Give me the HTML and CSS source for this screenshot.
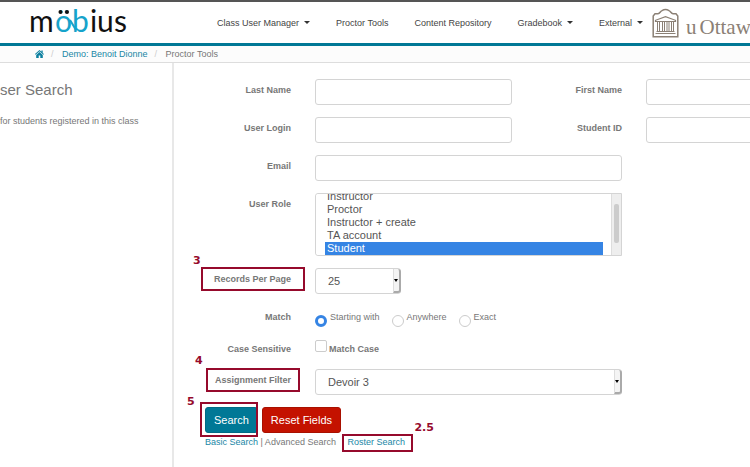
FILE: index.html
```html
<!DOCTYPE html>
<html lang="en">
<head>
<meta charset="utf-8">
<title>Proctor Tools</title>
<link rel="stylesheet" href="styles.css">
</head>
<body>
<header class="topbar">
  <a class="brand" href="#" aria-label="möbius">
    <svg width="98" height="30" viewBox="0 0 98 30">
      <text class="wordmark" y="24"><tspan x="-1">m</tspan><tspan class="teal" x="25">ö</tspan><tspan class="teal" x="42">b</tspan><tspan x="60">i</tspan><tspan x="67">u</tspan><tspan x="84">s</tspan></text>
      <path class="twist" d="M40 12Q43 17 46 22"/>
      <circle cx="30.500" cy="4" r="2"/><circle cx="37" cy="4" r="2"/>
    </svg>
  </a>
  <nav class="nav">
    <a class="drop" href="#">Class User Manager</a>
    <a href="#">Proctor Tools</a>
    <a href="#">Content Repository</a>
    <a class="drop" href="#">Gradebook</a>
    <a class="drop" href="#">External</a>
  </nav>
  <a class="school" href="#">
    <svg width="27" height="30" viewBox="0 0 27 30" fill="none" stroke="#8b8075">
      <path stroke-width="1.500" d="M1.200 28.800V8L3 5.700H6C8 5.700 8 3.400 10 2.600Q13.500 .6 17 2.600C19 3.400 19 5.700 21 5.700H24L25.800 8V28.800Z"/>
      <path stroke-width="1.200" d="M3.500 13.500V12.300L13.500 8.700L23.500 12.300V13.500ZM3.500 25.500H23.500"/>
      <path stroke-width="1" d="M5.500 14V23.500M7.500 14V23.500M10.500 14V23.500M12.500 14V23.500M15 14V23.500M17 14V23.500M19.500 14V23.500M21.500 14V23.500M4.500 23.500H22.500"/>
    </svg>
    <span>u</span><span>Ottaw</span>
  </a>
</header>
<nav class="crumbs" aria-label="Breadcrumb">
  <a href="#" aria-label="Home"><svg width="9" height="8" viewBox="0 0 9 8"><path fill="#0b7f9f" d="M4.500 0L6.400 1.700V.6H7.700V2.900L9 4.100L8.400 4.700L4.500 1.300L.6 4.700L0 4.100ZM4.500 2.100L7.800 5V8H5.300V5.600H3.700V8H1.200V5Z"/></svg></a>
  <span class="slash">/</span>
  <a href="#">Demo: Benoit Dionne</a>
  <span class="slash">/</span>
  <span>Proctor Tools</span>
</nav>
<div class="page">
  <aside class="side">
    <h1>ser Search</h1>
    <p>for students registered in this class</p>
  </aside>
  <main class="main">
    <form>
      <div class="fields">
        <label for="last">Last Name</label>
        <input class="box" id="last" type="text">
        <label for="first">First Name</label>
        <input class="box" id="first" type="text">

        <label for="login">User Login</label>
        <input class="box" id="login" type="text">
        <label for="sid">Student ID</label>
        <input class="box" id="sid" type="text">

        <label class="lead" for="email">Email</label>
        <input class="box wide" id="email" type="text">

        <label class="lead" for="role">User Role</label>
        <div class="box list wide">
          <select id="role" multiple size="5">
            <option>Instructor</option>
            <option>Proctor</option>
            <option>Instructor + create</option>
            <option>TA account</option>
            <option selected>Student</option>
          </select>
          <span class="track"><span class="thumb"></span></span>
        </div>

        <label class="lead" for="records"><span class="callout records">Records Per Page<b class="num">3</b></span></label>
        <div class="pick short wide">
          <select class="box" id="records"><option>25</option></select>
          <span class="arrow"></span>
        </div>

        <span class="label lead" id="match">Match</span>
        <div class="radios wide" role="radiogroup" aria-labelledby="match">
          <label><input type="radio" name="match" checked>Starting with</label>
          <label><input type="radio" name="match">Anywhere</label>
          <label><input type="radio" name="match">Exact</label>
        </div>

        <span class="label lead">Case Sensitive</span>
        <div class="check wide">
          <input type="checkbox" id="case"><label for="case">Match Case</label>
        </div>

        <label class="lead" for="assign"><span class="callout assign">Assignment Filter<b class="num">4</b></span></label>
        <div class="pick wide">
          <select class="box" id="assign"><option>Devoir 3</option></select>
          <span class="arrow"></span>
        </div>
      </div>
      <div class="actions">
        <span class="callout search"><button type="submit" class="go">Search</button><b class="num">5</b></span>
        <button type="reset" class="reset">Reset Fields</button>
      </div>
      <div class="modes">
        <a href="#">Basic Search</a> | Advanced Search
        <span class="callout roster"><a href="#">Roster Search</a><b class="num">2.5</b></span>
      </div>
    </form>
  </main>
</div>
<script src="script.js"></script>
</body>
</html>
```
FILE: styles.css
```css
* { box-sizing: border-box; }

body {
  margin: 0;
  min-height: 100vh;
  display: flex;
  flex-direction: column;
  overflow: hidden;
  background: #fff;
  color: #777;
  font: 9px/14px "Liberation Sans", Arial, sans-serif;
}

a { color: #1a87a6; text-decoration: none; }

.topbar {
  display: flex;
  align-items: center;
  height: 46px;
  padding-left: 30px;
  border-top: 2px solid #555;
  border-bottom: 3px solid #007896;
  white-space: nowrap;
}

.brand { flex: none; height: 30px; margin-right: 89px; }
.brand svg { overflow: visible; fill: #111; }
.wordmark { font: 400 30px Lato, sans-serif; }
.wordmark .teal { fill: #16a3cb; }
.twist { fill: none; stroke: #16a3cb; stroke-width: 2; }

.nav { display: flex; gap: 26px; }
.nav a { color: #444; }
.drop::after {
  content: "";
  display: inline-block;
  margin-left: 5px;
  vertical-align: 2px;
  border: 3px solid transparent;
  border-top-color: #333;
  border-bottom: 0;
}

.school {
  display: flex;
  align-items: center;
  gap: 3px;
  margin-left: 9px;
  color: #8b8075;
  font: 21px/30px "Liberation Serif", serif;
}
.school svg { margin-right: 4px; }
.school span { padding-top: 8px; }

.crumbs {
  display: flex;
  align-items: center;
  height: 17px;
  padding: 0 35px;
  border-bottom: 1px solid #ddd;
  background: #fcfcfc;
}
.crumbs a:first-child { display: flex; }
.slash { width: 18px; padding-left: 7px; color: #ccc; }

.page { display: flex; flex: 1; }
.side {
  flex: none;
  width: 174px;
  border-right: 2px solid #e8e8e8;
}
.side h1 { margin: 17px 0 14px; font-size: 15px; line-height: 20px; font-weight: 400; }
.side p { margin: 0; }

.main { flex: 1; min-width: 0; padding-top: 16px; }

.fields {
  display: grid;
  grid-template-columns: 117px 197px 86px minmax(197px, 1fr);
  gap: 12px 24px;
}
.fields > label, .label {
  padding-top: 4px;
  text-align: right;
  font-weight: 700;
}
.fields > .lead { grid-column: 1; }
.fields > .wide { grid-column: 2 / 4; }

.box {
  width: 100%;
  height: 26px;
  border: 1px solid #d4d4d4;
  border-radius: 3px;
  background: #fff;
  color: #555;
}

.list { display: flex; height: 63px; overflow: hidden; border-radius: 3px 0 0 3px; }
.list select {
  flex: 1;
  height: 61px;
  padding: 0 8px 0 9px;
  border: 0;
  outline: 0;
  background: #fff;
  color: #555;
  font: 11px/13px "Liberation Sans", Arial, sans-serif;
  scrollbar-width: none;
}
.list option { min-height: 13px; height: 13px; padding: 0 2px; }
.list option:checked { background: #3584e4 linear-gradient(#3584e4, #3584e4); color: #fff; }
.track { width: 10px; padding: 10px 2px; border-left: 1px solid #ddd; background: #eee; }
.thumb { display: block; height: 39px; border-radius: 2px; background: #ccc; }

.pick { position: relative; }
.short { width: 86px; }
.pick select {
  appearance: none;
  padding: 0 12px;
  font: 11px "Liberation Sans", Arial, sans-serif;
}
.arrow {
  position: absolute;
  inset: 1px 0 1px auto;
  width: 8px;
  border: solid #aaa;
  border-width: 0 2px 2px 0;
  border-left: 1px solid #ddd;
  border-radius: 0 3px 3px 0;
  background: #f4f4f4;
  pointer-events: none;
}
.arrow::after {
  content: "";
  position: absolute;
  top: 10px;
  left: 0;
  border: 2px solid transparent;
  border-top: 3px solid #000;
  border-bottom: 0;
}

.radios { display: flex; gap: 12px; height: 20px; padding-top: 4px; }
.radios label { display: flex; gap: 3px; }
.radios input, .check input {
  appearance: none;
  flex: none;
  width: 12px;
  height: 12px;
  margin: 0;
  border: 1px solid #ccc;
  background: #fff;
}
.radios input { margin-top: 5px; border-radius: 50%; }
.radios input:checked { border: 3px solid #3584e4; }

.check { display: flex; gap: 2px; height: 19px; padding-top: 2px; font-weight: 700; }
.check input { border-radius: 2px; }
.check label { padding-top: 2px; }

.actions { display: flex; gap: 4px; margin: 12px 0 0 31px; }
.actions button {
  height: 26px;
  padding: 0 8px;
  border: 1px solid #006a85;
  border-radius: 3px;
  background: #007896;
  color: #fff;
  font: 11px "Liberation Sans", Arial, sans-serif;
}
.actions .reset { border-color: #a81000; background: #c41200; }

.modes { margin: 2px 0 0 31px; white-space: nowrap; }

.callout { position: relative; display: inline-block; }
.callout::after {
  content: "";
  position: absolute;
  inset: -5px -14px -5px -13px;
  border: 2px solid #960a2c;
  pointer-events: none;
}
.num {
  position: absolute;
  color: #960a2c;
  font: 700 11px/12px "DejaVu Sans", sans-serif;
}
.records .num { top: -17px; left: -21px; }
.assign::after { inset: -5px -9px -5px -9px; }
.assign .num { top: -18px; left: -20px; }
.search::after { inset: -5px 0 -4px -5px; }
.search .num { top: -11px; left: -18px; }
.roster { margin-left: 9px; }
.roster::after { inset: -1px -8px -3px -5px; }
.roster .num { top: -13px; right: -29px; }
```
FILE: script.js
```js
const role = document.getElementById("role");
role.scrollTop = role.scrollHeight;
```
